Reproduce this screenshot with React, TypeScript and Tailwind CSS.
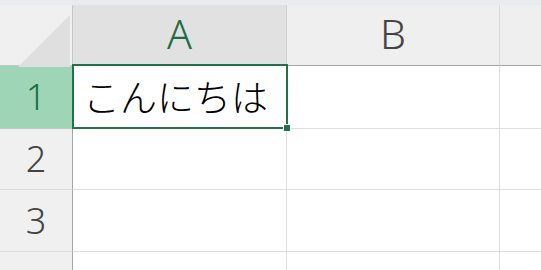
const columns = [
  { key: 'A', width: 'w-[214px]', selected: true },
  { key: 'B', width: 'w-[213px]', selected: false },
];

const rows = [
  { n: 1, height: 'h-[63px]', value: 'こんにちは', selected: true },
  { n: 2, height: 'h-[61px]', value: '', selected: false },
  { n: 3, height: 'h-[62px]', value: '', selected: false },
  { n: 4, height: 'h-[62px]', value: '', selected: false },
];

const Corner = () => (
  <div className="w-[73px] shrink-0 border-r border-b border-[#c6c6c6] bg-[#f0f0f0] relative">
    <svg className="absolute left-[18px] top-[10px]" width="52" height="52" viewBox="0 0 52 52">
      <polygon points="52,0 52,52 0,52" fill="#dfdfdf" />
    </svg>
  </div>
);

export default function App() {
  return (
    <div className="w-[541px] h-[270px] overflow-hidden bg-white relative font-['Noto_Sans','Noto_Sans_CJK_JP',sans-serif] font-light">
      <div className="h-[5px] bg-[#e8ecef]" />

      <div className="flex h-[61px]">
        <Corner />
        {columns.map(col => (
          <div
            key={col.key}
            className={`${col.width} shrink-0 flex items-center justify-center pb-[2px] border-r border-b text-[41px] ${
              col.selected
                ? 'bg-[#e1e1e1] text-[#1e6e42] border-r-[#d0d0d0] border-b-[#a6a6a6]'
                : 'bg-[#efefef] text-[#444444] border-r-[#dadada] border-b-[#a6a6a6]'
            }`}
          >
            {col.key}
          </div>
        ))}
        <div className="flex-1 bg-[#efefef] border-b border-[#a6a6a6]" />
      </div>

      {rows.map(row => (
        <div key={row.n} className={`flex ${row.height}`}>
          <div
            className={`w-[73px] shrink-0 flex items-center justify-center border-r border-b text-[36px] ${
              row.selected
                ? 'bg-[#9fd5b7] text-[#1e6e42] border-r-[#a6a6a6] border-b-[#c6c6c6]'
                : 'bg-[#f0f0f0] text-[#444444] border-r-[#a6a6a6] border-b-[#dcdcdc]'
            }`}
          >
            {row.n}
          </div>
          <div className="w-[214px] shrink-0 flex items-center pl-[10px] border-r border-b border-[#dedede] text-[37px] text-black font-['Noto_Sans_CJK_JP',sans-serif] font-light">
            {row.value}
          </div>
          <div className="w-[213px] shrink-0 border-r border-b border-[#dedede]" />
          <div className="flex-1 border-b border-[#dedede]" />
        </div>
      ))}

      <div className="absolute left-[72px] top-[64px] w-[216px] h-[65px] border-2 border-[#217346]" />
      <div className="absolute left-[284px] top-[125px] w-[6px] h-[6px] bg-[#217346] outline outline-1 outline-white" />
    </div>
  );
}
